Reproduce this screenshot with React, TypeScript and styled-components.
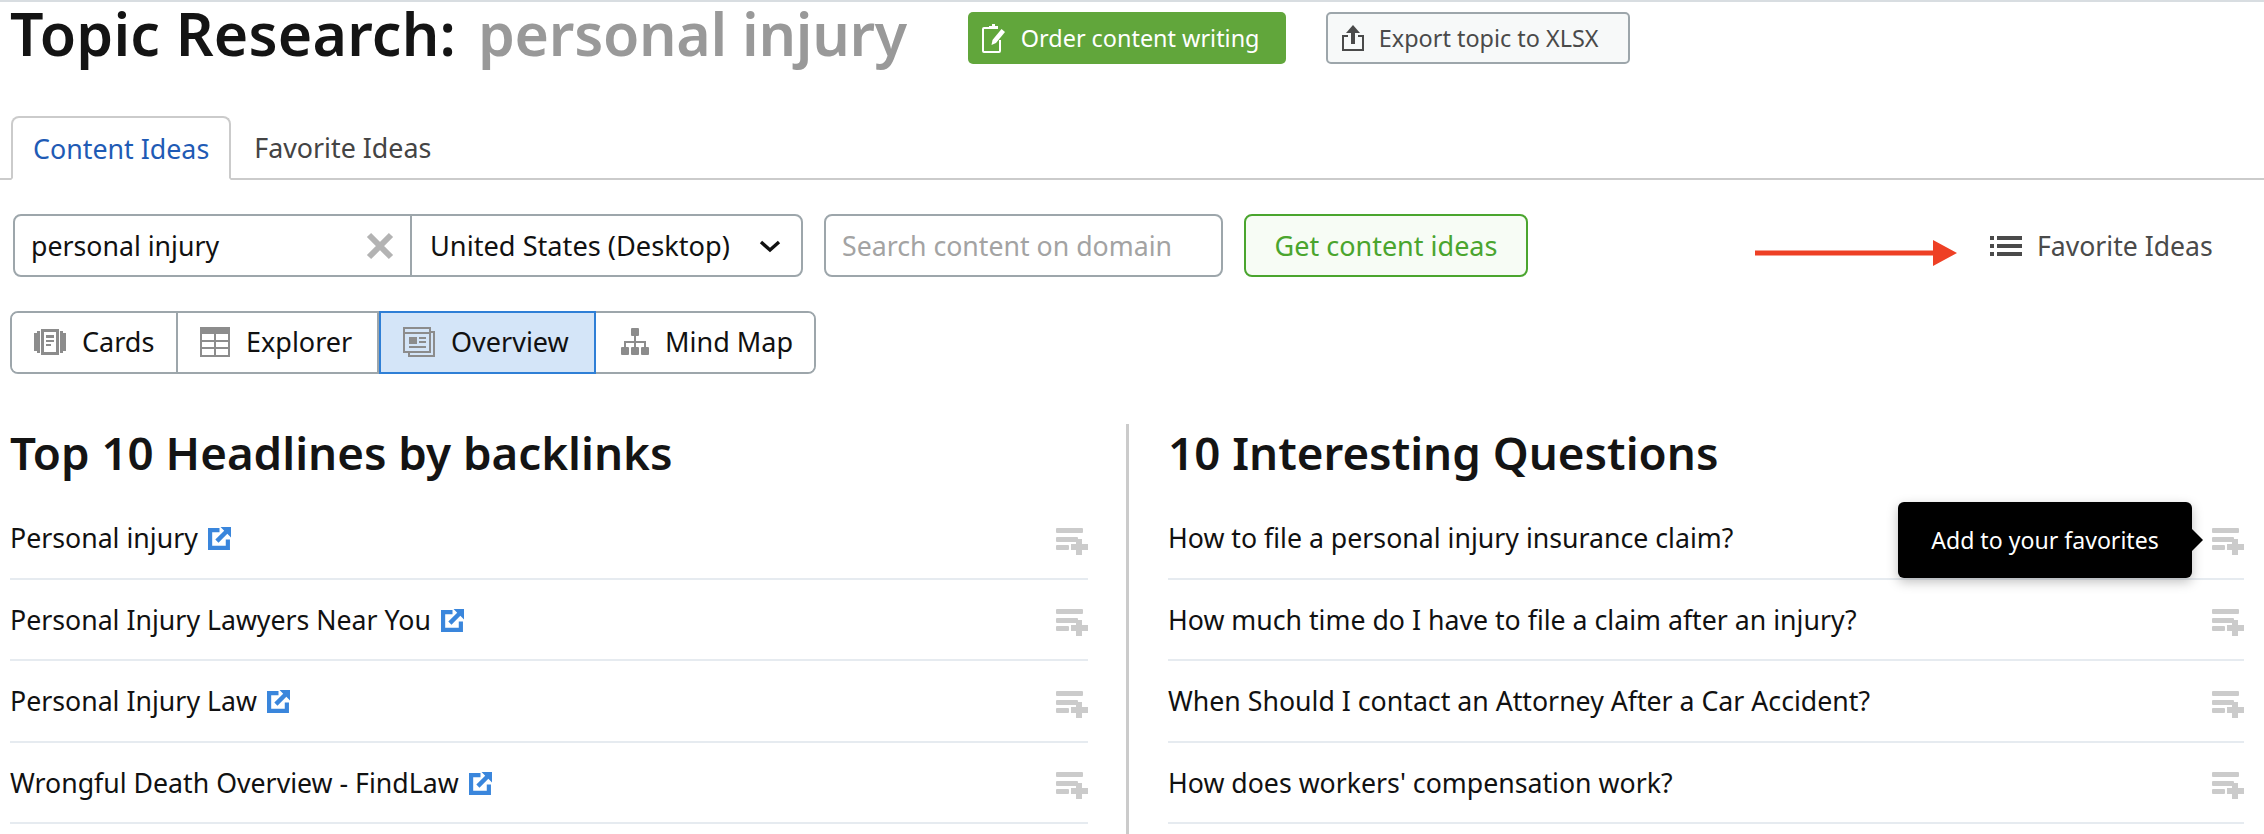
import React from 'react';
import styled, { createGlobalStyle } from 'styled-components';

const GlobalStyle = createGlobalStyle`
  html, body {
    margin: 0;
    padding: 0;
    background: #fff;
    overflow: hidden;
  }
  body {
    font-family: "Noto Sans", "Open Sans", sans-serif;
    color: #111;
  }
  * { box-sizing: border-box; }
`;

const Page = styled.div`
  width: 2264px;
  height: 834px;
  overflow: hidden;
  border-top: 2px solid #d8dde1;
`;

const Header = styled.header`
  display: flex;
  align-items: center;
  height: 52px;
  margin-top: 10px;
  padding-left: 10px;
`;

const Title = styled.h1`
  margin: 0 0 10px;
  font-size: 59px;
  font-weight: 600;
  line-height: 60px;
  color: #141414;
  white-space: nowrap;
  letter-spacing: 0.2px;
`;

const TitleQuery = styled.span`
  margin-left: 22px;
  color: #999;
  letter-spacing: -0.3px;
`;

const HeaderButton = styled.button<{ $green?: boolean }>`
  display: flex;
  align-items: center;
  height: 52px;
  font-family: inherit;
  font-size: 23.4px;
  border-radius: 5px;
  white-space: nowrap;
  padding: 0 0 0 14px;
  gap: 15px;
  width: ${p => (p.$green ? '318px' : '304px')};
  margin-left: ${p => (p.$green ? '61px' : '40px')};
  color: ${p => (p.$green ? '#fff' : '#4a4a4a')};
  background: ${p => (p.$green ? '#61a63b' : '#f7f9f9')};
  border: ${p => (p.$green ? 'none' : '2px solid #9da6ab')};
`;

const Tabs = styled.nav`
  display: flex;
  height: 64px;
  margin-top: 52px;
  padding-left: 11px;
  border-bottom: 2px solid #cbcbcb;
`;

const Tab = styled.div<{ $active?: boolean }>`
  display: flex;
  align-items: center;
  height: ${p => (p.$active ? '64px' : '62px')};
  font-size: 26.8px;
  padding: 0 ${p => (p.$active ? '20px' : '23px')};
  color: ${p => (p.$active ? '#1f5bb5' : '#444')};
  background: ${p => (p.$active ? '#fff' : 'transparent')};
  border: ${p => (p.$active ? '2px solid #cbcbcb' : 'none')};
  border-bottom: ${p => (p.$active ? '2px solid #fff' : 'none')};
  border-radius: 8px 8px 0 0;
`;

const SearchRow = styled.div`
  display: flex;
  align-items: center;
  height: 63px;
  margin-top: 34px;
  padding-left: 13px;
`;

const SearchBox = styled.div`
  display: flex;
  width: 790px;
  height: 63px;
  border: 2px solid #9da6ab;
  border-radius: 8px;
`;

const KeywordField = styled.div`
  display: flex;
  align-items: center;
  justify-content: space-between;
  width: 397px;
  padding: 0 16px 0 16px;
  font-size: 26.7px;
  border-right: 2px solid #9da6ab;
`;

const CountryField = styled.div`
  display: flex;
  align-items: center;
  justify-content: space-between;
  flex: 1;
  padding: 0 20px 0 18px;
  font-size: 27.2px;
  white-space: nowrap;
`;

const DomainField = styled.div`
  display: flex;
  align-items: center;
  width: 399px;
  height: 63px;
  margin-left: 21px;
  padding-left: 16px;
  font-size: 26.7px;
  color: #a3a3a3;
  border: 2px solid #9da6ab;
  border-radius: 8px;
  white-space: nowrap;
`;

const SubmitButton = styled.button`
  width: 284px;
  height: 63px;
  margin-left: 21px;
  font-family: inherit;
  font-size: 27px;
  color: #4aa52e;
  background: #f7fcf5;
  border: 2px solid #4aa52e;
  border-radius: 8px;
  white-space: nowrap;
`;

const AnnotationArrow = styled.svg`
  margin-left: 227px;
  margin-top: 14px;
`;

const FavoritesLink = styled.div`
  display: flex;
  align-items: center;
  gap: 15px;
  margin-left: 33px;
  font-size: 26.6px;
  color: #4a4a4a;
  white-space: nowrap;
`;

const Toggles = styled.div`
  display: inline-flex;
  height: 63px;
  margin-top: 34px;
  margin-left: 10px;
  border: 2px solid #9da6ab;
  border-radius: 8px;
`;

const Toggle = styled.div<{ $active?: boolean; $w: number; $last?: boolean }>`
  display: flex;
  align-items: center;
  gap: 16px;
  width: ${p => p.$w}px;
  margin: ${p => (p.$active ? '-2px 0' : '0')};
  padding-left: ${p => (p.$last ? '25px' : '22px')};
  padding-bottom: 2px;
  font-size: 27px;
  color: #111;
  background: ${p => (p.$active ? '#d4e5f8' : '#fff')};
  border: ${p => (p.$active ? '2px solid #2f7fd6' : 'none')};
  border-right: ${p => (p.$active ? '2px solid #2f7fd6' : p.$last ? 'none' : '2px solid #9da6ab')};
  border-radius: ${p => (p.$last ? '0 6px 6px 0' : '6px 0 0 6px')};
  &:not(:first-child):not(:last-child) {
    border-radius: 0;
  }
`;

const Content = styled.main`
  display: flex;
  margin-top: 50px;
  padding-left: 10px;
`;

const Column = styled.section<{ $right?: boolean }>`
  width: ${p => (p.$right ? '1118px' : '1078px')};
  margin-left: ${p => (p.$right ? '38px' : '0')};
  padding-left: ${p => (p.$right ? '39px' : '0')};
  border-left: ${p => (p.$right ? '3px solid #cbcbcb' : 'none')};
  height: 410px;
`;

const Heading = styled.h2`
  margin: 0;
  height: 74px;
  font-size: 45.7px;
  font-weight: 600;
  line-height: 56px;
  color: #141414;
  white-space: nowrap;
`;

const Row = styled.div`
  position: relative;
  display: flex;
  align-items: center;
  justify-content: space-between;
  height: 81.5px;
  font-size: 26.7px;
  color: #111;
  border-bottom: 2px solid #e6ebf0;
`;

const RowText = styled.div`
  display: flex;
  align-items: center;
  gap: 10px;
  white-space: nowrap;
`;

const IconSlot = styled.span`
  display: flex;
  margin-top: 7px;
`;

const LinkSlot = styled.span`
  display: flex;
  margin-top: 2px;
`;

const Tooltip = styled.div`
  position: absolute;
  right: 52px;
  top: 4px;
  display: flex;
  align-items: center;
  justify-content: center;
  width: 294px;
  height: 76px;
  font-size: 23.1px;
  color: #fff;
  background: #000;
  border-radius: 6px;
  box-shadow: 0 4px 12px rgba(0, 0, 0, 0.25);
  &::after {
    content: '';
    position: absolute;
    right: -11px;
    top: 27px;
    border-top: 11px solid transparent;
    border-bottom: 11px solid transparent;
    border-left: 11px solid #000;
  }
`;

const OrderIcon = () => (
  <svg width="24" height="30" viewBox="0 0 24 30" fill="none">
    <path d="M7 5H2a1 1 0 0 0-1 1v22a1 1 0 0 0 1 1h15a1 1 0 0 0 1-1V17" stroke="#fff" strokeWidth="2" />
    <path d="M7 6V3h3V1h3v2h3v3z" fill="#fff" />
    <path d="M19.5 6l3.5 3-9 11-4.500 2 1-5z" fill="#fff" />
  </svg>
);

const ExportIcon = () => (
  <svg width="22" height="26" viewBox="0 0 22 26" fill="none">
    <path d="M6 11H1v14h20V11h-5" stroke="#4a4a4a" strokeWidth="2" />
    <path d="M11 0l7 8h-5v11H9V8H4z" fill="#4a4a4a" />
  </svg>
);

const CloseIcon = () => (
  <svg width="28" height="28" viewBox="0 0 28 28">
    <path d="M3 3l22 22M25 3L3 25" stroke="#b3b3b3" strokeWidth="6" />
  </svg>
);

const ChevronIcon = () => (
  <svg width="22" height="14" viewBox="0 0 22 14" fill="none">
    <path d="M2 3l9 8 9-8" stroke="#111" strokeWidth="3.4" />
  </svg>
);

const ListIcon = () => (
  <svg width="32" height="20" viewBox="0 0 32 20" fill="#4a4a4a">
    <rect x="0" y="0" width="4" height="4" />
    <rect x="0" y="8" width="4" height="4" />
    <rect x="0" y="16" width="4" height="4" />
    <rect x="7" y="0" width="25" height="4" />
    <rect x="7" y="8" width="25" height="4" />
    <rect x="7" y="16" width="25" height="4" />
  </svg>
);

const CardsIcon = () => (
  <svg width="32" height="26" viewBox="0 0 32 26" fill="#8c8c8c">
    <path d="M0 4h3V2h3v22H3v-2H0zM26 2h3v2h3v18h-3v2h-3z" />
    <path fillRule="evenodd" d="M7 0h18v26H7zM10 3v20h12V3z" />
    <path d="M12 6h8v3h-8zM12 11h8v2h-8zM12 15h5v2h-5z" />
  </svg>
);

const TableIcon = () => (
  <svg width="30" height="30" viewBox="0 0 30 30" fill="none">
    <rect x="0" y="0" width="30" height="7" fill="#8c8c8c" />
    <path d="M1 1h28v28H1zM1 14h28M1 21h28M15 7v22" stroke="#8c8c8c" strokeWidth="2" />
  </svg>
);

const OverviewIcon = () => (
  <svg width="32" height="30" viewBox="0 0 32 30" fill="none" stroke="#8c8c8c">
    <path d="M1 1h26v24H1zM1 6h26" strokeWidth="2" />
    <path d="M27 5h4v24H6v-4" strokeWidth="2" />
    <path d="M6 10h8v7H6z" fill="#8c8c8c" strokeWidth="0" />
    <path d="M16 11h7M16 15h7M6 20h17" strokeWidth="2" />
  </svg>
);

const MindMapIcon = () => (
  <svg width="28" height="28" viewBox="0 0 28 28" fill="#8c8c8c">
    <rect x="10" y="0" width="8" height="8" rx="1" />
    <path d="M13 8h2v5h10v6h-2v-4H15v4h-2v-4H5v4H3v-6h10z" />
    <rect x="0" y="19" width="8" height="8" rx="1" />
    <rect x="10" y="19" width="8" height="8" rx="1" />
    <rect x="20" y="19" width="8" height="8" rx="1" />
  </svg>
);

const ExternalIcon = () => (
  <svg width="23" height="23" viewBox="0 0 22 22" fill="none">
    <path d="M11 3H2v17h17v-8" stroke="#3a86dc" strokeWidth="4" />
    <path d="M12 0h10v10l-3.500-3.500L10 15l-3-3 8.500-8.500z" fill="#3a86dc" />
  </svg>
);

const AddIcon = () => (
  <svg width="32" height="27" viewBox="0 0 32 27" fill="#cbcbcb">
    <rect x="0" y="0" width="27" height="5" rx="1" />
    <rect x="0" y="9" width="22" height="5" rx="1" />
    <rect x="0" y="17" width="13" height="5" rx="1" />
    <rect x="20" y="11" width="6" height="16" />
    <rect x="15" y="16" width="17" height="6" />
  </svg>
);

const headlines = [
  'Personal injury',
  'Personal Injury Lawyers Near You',
  'Personal Injury Law',
  'Wrongful Death Overview - FindLaw',
];

const questions = [
  'How to file a personal injury insurance claim?',
  'How much time do I have to file a claim after an injury?',
  'When Should I contact an Attorney After a Car Accident?',
  "How does workers' compensation work?",
];

export default function App() {
  return (
    <Page>
      <GlobalStyle />
      <Header>
        <Title>
          Topic Research:<TitleQuery>personal injury</TitleQuery>
        </Title>
        <HeaderButton $green>
          <OrderIcon />
          Order content writing
        </HeaderButton>
        <HeaderButton>
          <ExportIcon />
          Export topic to XLSX
        </HeaderButton>
      </Header>

      <Tabs>
        <Tab $active>Content Ideas</Tab>
        <Tab>Favorite Ideas</Tab>
      </Tabs>

      <SearchRow>
        <SearchBox>
          <KeywordField>
            personal injury
            <CloseIcon />
          </KeywordField>
          <CountryField>
            United States (Desktop)
            <ChevronIcon />
          </CountryField>
        </SearchBox>
        <DomainField>Search content on domain</DomainField>
        <SubmitButton>Get content ideas</SubmitButton>
        <AnnotationArrow width="202" height="26" viewBox="0 0 202 26">
          <path d="M0 10.500h178V0l24 13-24 13V15.500H0z" fill="#ee4025" />
        </AnnotationArrow>
        <FavoritesLink>
          <ListIcon />
          Favorite Ideas
        </FavoritesLink>
      </SearchRow>

      <Toggles>
        <Toggle $w={166}>
          <CardsIcon />
          Cards
        </Toggle>
        <Toggle $w={201}>
          <TableIcon />
          Explorer
        </Toggle>
        <Toggle $active $w={217}>
          <OverviewIcon />
          Overview
        </Toggle>
        <Toggle $last $w={218}>
          <MindMapIcon />
          Mind Map
        </Toggle>
      </Toggles>

      <Content>
        <Column>
          <Heading>Top 10 Headlines by backlinks</Heading>
          {headlines.map(text => (
            <Row key={text}>
              <RowText>
                {text}
                <LinkSlot>
                  <ExternalIcon />
                </LinkSlot>
              </RowText>
              <IconSlot>
                <AddIcon />
              </IconSlot>
            </Row>
          ))}
        </Column>
        <Column $right>
          <Heading>10 Interesting Questions</Heading>
          {questions.map((text, i) => (
            <Row key={text}>
              <RowText>{text}</RowText>
              {i === 0 && <Tooltip>Add to your favorites</Tooltip>}
              <IconSlot>
                <AddIcon />
              </IconSlot>
            </Row>
          ))}
        </Column>
      </Content>
    </Page>
  );
}
